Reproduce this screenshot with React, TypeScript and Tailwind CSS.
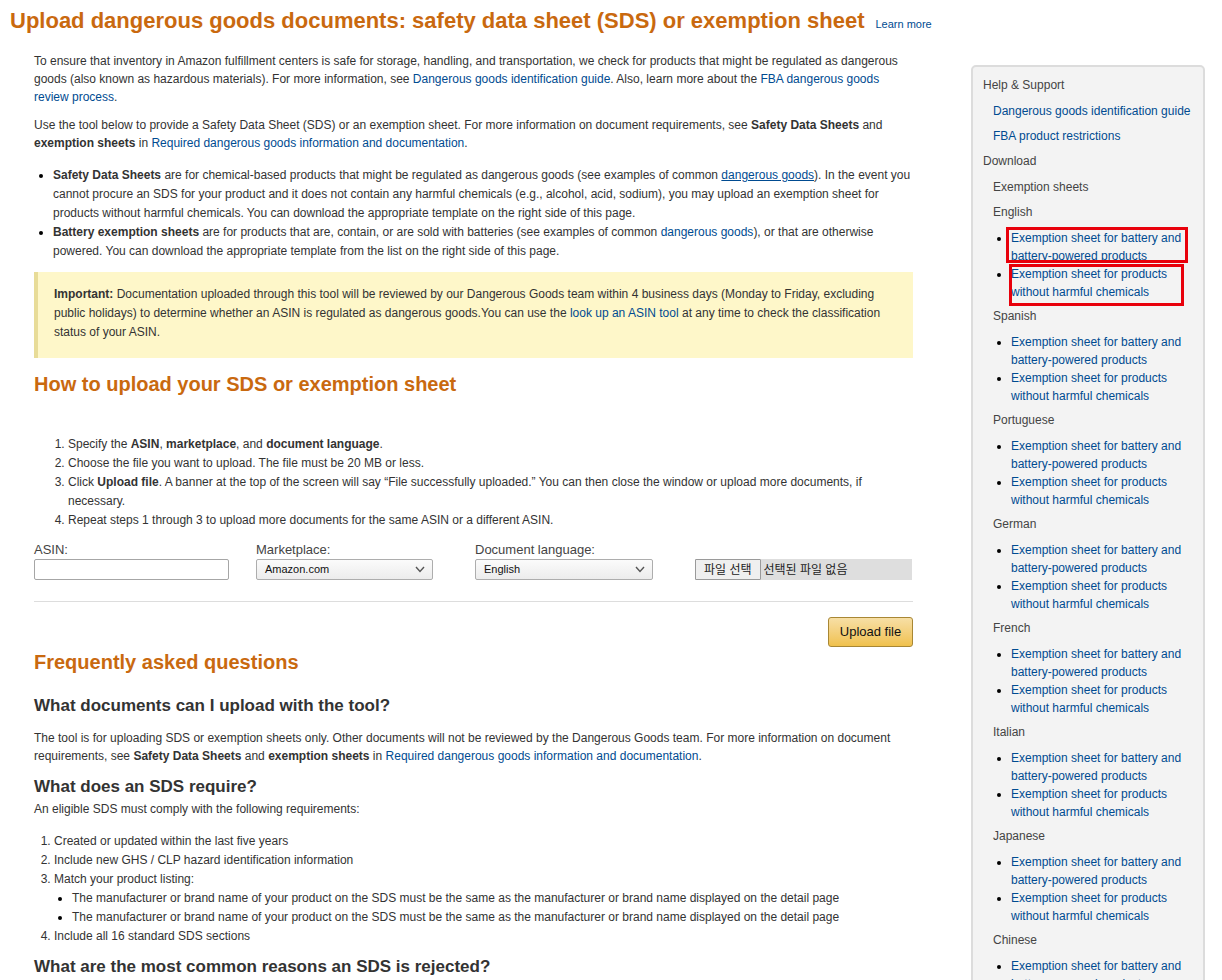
import React from "react";

const F = { fontFamily: '"Liberation Sans", Arial, sans-serif' };
const KR = { fontFamily: '"Liberation Sans", "Noto Sans CJK KR", sans-serif' };

function A({ children, u }: { children: React.ReactNode; u?: boolean }) {
  return <a className={"text-[#004b91] " + (u ? "underline" : "")}>{children}</a>;
}

function Chevron() {
  return (
    <svg className="absolute right-[8px] top-[7px]" width="10" height="7" viewBox="0 0 10 7">
      <path d="M1 1 L5 5.5 L9 1" fill="none" stroke="#555" strokeWidth="1.4" />
    </svg>
  );
}

function LangGroup({ name, boxed }: { name: string; boxed?: boolean }) {
  return (
    <div>
      <div className="pl-[22px] leading-[18px] text-[#444] mb-[8px]">{name}</div>
      <ul className="list-disc pl-[40px] pr-[10px] mb-[6px] leading-[18px] marker:text-black">
        <li className="relative">
          <A>Exemption sheet for battery and battery-powered products</A>
          {boxed && (
            <span className="absolute left-[-5px] top-[-2px] w-[182px] h-[36px] border-[3px] border-[#e8000b] pointer-events-none" />
          )}
        </li>
        <li className="relative">
          <A>Exemption sheet for products without harmful chemicals</A>
          {boxed && (
            <span className="absolute left-[-2px] top-[-1px] w-[175px] h-[42px] border-[3px] border-[#e8000b] pointer-events-none" />
          )}
        </li>
      </ul>
    </div>
  );
}

export default function App() {
  return (
    <div className="w-[1222px] h-[980px] overflow-hidden bg-white text-[#333] text-[12px]" style={F}>
      <div className="pt-[7px] pl-[10px] flex items-baseline gap-[11px]">
        <h1 className="text-[22px] leading-[28px] font-bold text-[#c9690f]">
          Upload dangerous goods documents: safety data sheet (SDS) or exemption sheet
        </h1>
        <a className="text-[11px] text-[#004b91]">Learn more</a>
      </div>

      <div className="flex mt-[17px]">
        <div className="ml-[34px] w-[879px] shrink-0">
          <p className="leading-[18px]">
            To ensure that inventory in Amazon fulfillment centers is safe for storage, handling, and transportation, we check for products that might be regulated as dangerous goods (also known as hazardous materials). For more information, see{" "}
            <A>Dangerous goods identification guide</A>. Also, learn more about the <A>FBA dangerous goods review process</A>.
          </p>
          <p className="leading-[18px] mt-[10px]">
            Use the tool below to provide a Safety Data Sheet (SDS) or an exemption sheet. For more information on document requirements, see <b>Safety Data Sheets</b> and <b>exemption sheets</b> in{" "}
            <A>Required dangerous goods information and documentation</A>.
          </p>
          <ul className="list-disc pl-[19px] mt-[14px] leading-[19px] text-[12px] marker:text-black">
            <li>
              <b>Safety Data Sheets</b> are for chemical-based products that might be regulated as dangerous goods (see examples of common <A u>dangerous goods</A>). In the event you cannot procure an SDS for your product and it does not contain any harmful chemicals (e.g., alcohol, acid, sodium), you may upload an exemption sheet for products without harmful chemicals. You can download the appropriate template on the right side of this page.
            </li>
            <li>
              <b>Battery exemption sheets</b> are for products that are, contain, or are sold with batteries (see examples of common <A>dangerous goods</A>), or that are otherwise powered. You can download the appropriate template from the list on the right side of this page.
            </li>
          </ul>

          <div className="mt-[11px] bg-[#fef7c9] border-l-[4px] border-[#e8dc98] pl-[16px] pr-[20px] pt-[13px] pb-[16px] leading-[19px]">
            <b>Important:</b> Documentation uploaded through this tool will be reviewed by our Dangerous Goods team within 4 business days (Monday to Friday, excluding public holidays) to determine whether an ASIN is regulated as dangerous goods.You can use the <A>look up an ASIN tool</A> at any time to check the classification status of your ASIN.
          </div>

          <h2 className="mt-[14px] text-[20px] leading-[24px] font-bold text-[#c9690f]">How to upload your SDS or exemption sheet</h2>

          <ol className="list-decimal pl-[34px] mt-[39px] leading-[19px]">
            <li>Specify the <b>ASIN</b>, <b>marketplace</b>, and <b>document language</b>.</li>
            <li>Choose the file you want to upload. The file must be 20 MB or less.</li>
            <li>Click <b>Upload file</b>. A banner at the top of the screen will say “File successfully uploaded.” You can then close the window or upload more documents, if necessary.</li>
            <li>Repeat steps 1 through 3 to upload more documents for the same ASIN or a different ASIN.</li>
          </ol>

          <div className="flex mt-[12px]">
            <div className="w-[222px]">
              <div className="text-[13px] leading-[16px] text-[#444] mb-[1px]">ASIN:</div>
              <input className="w-[195px] h-[21px] border border-[#a6a6a6] rounded-[2px] bg-white" />
            </div>
            <div className="w-[219px]">
              <div className="text-[13px] leading-[16px] text-[#444] mb-[1px]">Marketplace:</div>
              <div className="relative w-[177px] h-[21px]">
                <div className="w-full h-full border border-[#adadad] rounded-[2px] bg-gradient-to-b from-[#fbfbfb] to-[#ececec] text-[11px] leading-[19px] pl-[8px] text-[#111]">Amazon.com</div>
                <Chevron />
              </div>
            </div>
            <div className="w-[220px]">
              <div className="text-[13px] leading-[16px] text-[#444] mb-[1px]">Document language:</div>
              <div className="relative w-[178px] h-[21px]">
                <div className="w-full h-full border border-[#adadad] rounded-[2px] bg-gradient-to-b from-[#fbfbfb] to-[#ececec] text-[11px] leading-[19px] pl-[8px] text-[#111]">English</div>
                <Chevron />
              </div>
            </div>
            <div className="pt-[17px]">
              <div className="w-[217px] h-[21px] bg-[#dedede] flex items-center text-[12px] text-[#222]" style={KR}>
                <div className="h-[21px] px-[8px] border border-[#9a9a9a] bg-[#efefef] rounded-[1px] flex items-center">파일 선택</div>
                <span className="ml-[3px]">선택된 파일 없음</span>
              </div>
            </div>
          </div>

          <hr className="mt-[21px] border-t border-[#dddddd]" />

          <div className="flex justify-end mt-[15px]">
            <button className="w-[85px] h-[30px] rounded-[3px] border border-[#a88734] bg-gradient-to-b from-[#f7dfa5] to-[#f0c14b] text-[13px] text-[#111]">Upload file</button>
          </div>

          <h2 className="mt-[3px] text-[20px] leading-[24px] font-bold text-[#c9690f]">Frequently asked questions</h2>
          <h3 className="mt-[21px] text-[17px] leading-[22px] font-bold text-[#333]">What documents can I upload with the tool?</h3>
          <p className="mt-[12px] leading-[18px]">
            The tool is for uploading SDS or exemption sheets only. Other documents will not be reviewed by the Dangerous Goods team. For more information on document requirements, see <b>Safety Data Sheets</b> and <b>exemption sheets</b> in{" "}
            <A>Required dangerous goods information and documentation</A>.
          </p>
          <h3 className="mt-[11px] text-[17px] leading-[22px] font-bold text-[#333]">What does an SDS require?</h3>
          <p className="mt-[2px] leading-[18px]">An eligible SDS must comply with the following requirements:</p>
          <ol className="list-decimal pl-[20px] mt-[14px] leading-[19px]">
            <li>Created or updated within the last five years</li>
            <li>Include new GHS / CLP hazard identification information</li>
            <li>
              Match your product listing:
              <ul className="list-disc pl-[18px] marker:text-black">
                <li>The manufacturer or brand name of your product on the SDS must be the same as the manufacturer or brand name displayed on the detail page</li>
                <li>The manufacturer or brand name of your product on the SDS must be the same as the manufacturer or brand name displayed on the detail page</li>
              </ul>
            </li>
            <li>Include all 16 standard SDS sections</li>
          </ol>
          <h3 className="mt-[10px] text-[17px] leading-[22px] font-bold text-[#333]">What are the most common reasons an SDS is rejected?</h3>
        </div>

        <div className="ml-[58px] mt-[13px] w-[234px] shrink-0 self-start bg-[#f3f3f3] border-2 border-[#dcdcdc] rounded-[5px] pt-[9px] pb-[20px] text-[12px]">
          <div className="pl-[10px] leading-[18px] text-[#444] mb-[8px]">Help &amp; Support</div>
          <div className="pl-[20px] leading-[18px] mb-[7px]"><A>Dangerous goods identification guide</A></div>
          <div className="pl-[20px] leading-[18px] mb-[7px]"><A>FBA product restrictions</A></div>
          <div className="pl-[10px] leading-[18px] text-[#444] mb-[8px]">Download</div>
          <div className="pl-[20px] leading-[18px] text-[#444] mb-[7px]">Exemption sheets</div>
          <div className="-ml-[2px]">
            <LangGroup name="English" boxed />
            <LangGroup name="Spanish" />
            <LangGroup name="Portuguese" />
            <LangGroup name="German" />
            <LangGroup name="French" />
            <LangGroup name="Italian" />
            <LangGroup name="Japanese" />
            <LangGroup name="Chinese" />
          </div>
        </div>
      </div>
    </div>
  );
}
